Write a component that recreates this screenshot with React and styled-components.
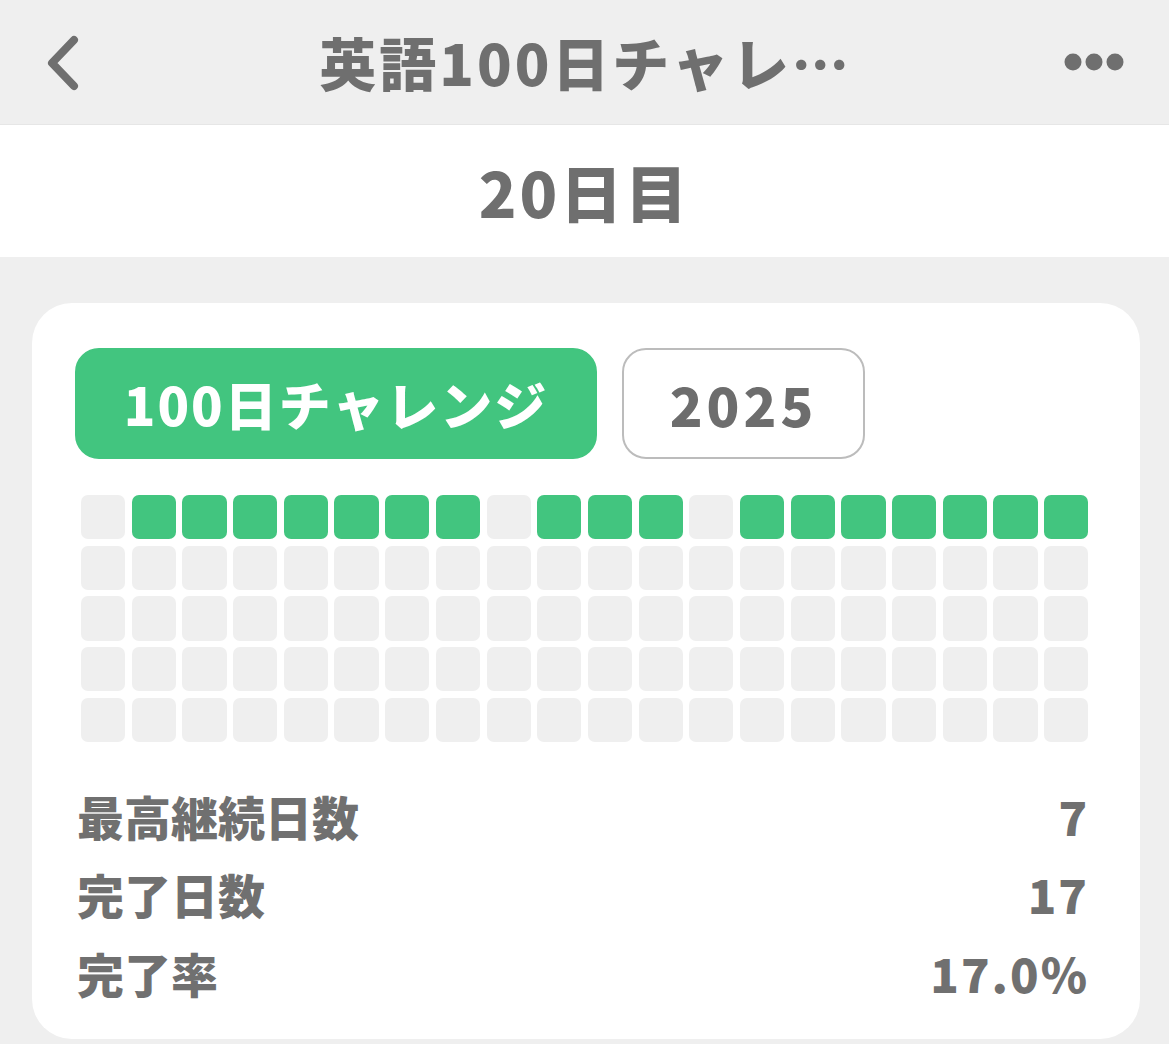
import React from "react";
import styled, { createGlobalStyle } from "styled-components";

const days = [
  0, 1, 1, 1, 1, 1, 1, 1, 0, 1, 1, 1, 0, 1, 1, 1, 1, 1, 1, 1,
];

const stats = [
  { label: "最高継続日数", value: "7" },
  { label: "完了日数", value: "17" },
  { label: "完了率", value: "17.0%" },
];

const App = () => {
  const cells = [];
  for (let i = 0; i < 100; i++) {
    cells.push(<Cell key={i} done={i < 20 && days[i] === 1} />);
  }

  return (
    <Page>
      <GlobalStyle />
      <NavBar>
        <NavIcon aria-label="back">
          <svg width="40" height="60" viewBox="0 0 40 60">
            <path
              d="M28 14 L6 37 L28 60"
              fill="none"
              stroke="#6f6f6f"
              strokeWidth="8"
              strokeLinecap="round"
              strokeLinejoin="round"
              transform="translate(0,-6)"
            />
          </svg>
        </NavIcon>
        <Title>英語100日チャレ…</Title>
        <NavIcon aria-label="more">
          <svg width="62" height="20" viewBox="0 0 62 20">
            <circle cx="10" cy="10" r="8.5" fill="#6f6f6f" />
            <circle cx="31" cy="10" r="8.5" fill="#6f6f6f" />
            <circle cx="52" cy="10" r="8.5" fill="#6f6f6f" />
          </svg>
        </NavIcon>
      </NavBar>
      <DayBar>20日目</DayBar>
      <Card>
        <Tabs>
          <Tab active>100日チャレンジ</Tab>
          <Tab>2025</Tab>
        </Tabs>
        <Grid>{cells}</Grid>
        <Stats>
          {stats.map((s) => (
            <StatRow key={s.label}>
              <span>{s.label}</span>
              <Value>{s.value}</Value>
            </StatRow>
          ))}
        </Stats>
      </Card>
    </Page>
  );
};

export default App;

const GlobalStyle = createGlobalStyle`
  body {
    margin: 0;
    background: #efefef;
    font-family: "Noto Sans CJK JP", "Noto Sans", sans-serif;
    color: #707070;
  }
`;

const Page = styled.div`
  min-height: 1044px;
  background: #efefef;
  overflow: hidden;
`;

const NavBar = styled.div`
  height: 125px;
  display: flex;
  align-items: center;
  justify-content: space-between;
  padding: 0 44px 0 46px;
  box-sizing: border-box;
  border-bottom: 1px solid #e6e6e6;
`;

const NavIcon = styled.div`
  display: flex;
  align-items: center;
  width: 62px;
  &:first-child {
    justify-content: flex-start;
  }
  &:last-child {
    justify-content: flex-end;
  }
`;

const Title = styled.div`
  font-size: 57px;
  font-weight: 900;
  color: #6f6f6f;
  letter-spacing: 3px;
  line-height: 1;
  margin-top: -2px;
`;

const DayBar = styled.div`
  height: 132px;
  background: #fff;
  display: flex;
  align-items: center;
  justify-content: center;
  font-size: 62px;
  font-weight: 900;
  letter-spacing: 3px;
  color: #6f6f6f;
`;

const Card = styled.div`
  margin: 46px 29px 0 32px;
  background: #fff;
  border-radius: 40px;
  padding: 45px 43px 28px;
`;

const Tabs = styled.div`
  display: flex;
  gap: 25px;
`;

const Tab = styled.div`
  height: 111px;
  box-sizing: border-box;
  display: flex;
  align-items: center;
  justify-content: center;
  width: ${(p) => (p.active ? "522px" : "243px")};
  border-radius: 24px;
  font-size: ${(p) => (p.active ? "52px" : "54px")};
  font-weight: 900;
  letter-spacing: ${(p) => (p.active ? "2px" : "4px")};
  background: ${(p) => (p.active ? "#42c57f" : "#fff")};
  color: ${(p) => (p.active ? "#fff" : "#6d6d6d")};
  border: 2px solid ${(p) => (p.active ? "#42c57f" : "#bcbcbc")};
`;

const Grid = styled.div`
  margin: 36px 9px 0 6px;
  display: grid;
  grid-template-columns: repeat(20, 1fr);
  gap: 6.5px;
`;

const Cell = styled.div`
  aspect-ratio: 1;
  border-radius: 7px;
  background: ${(p) => (p.done ? "#42c57f" : "#efefef")};
`;

const Stats = styled.div`
  margin: 34px 10px 0 2px;
`;

const StatRow = styled.div`
  display: flex;
  justify-content: space-between;
  align-items: center;
  height: 78.5px;
  font-size: 47px;
  font-weight: 900;
  color: #707070;
`;

const Value = styled.span`
  letter-spacing: 2px;
  margin-right: -2px;
`;
